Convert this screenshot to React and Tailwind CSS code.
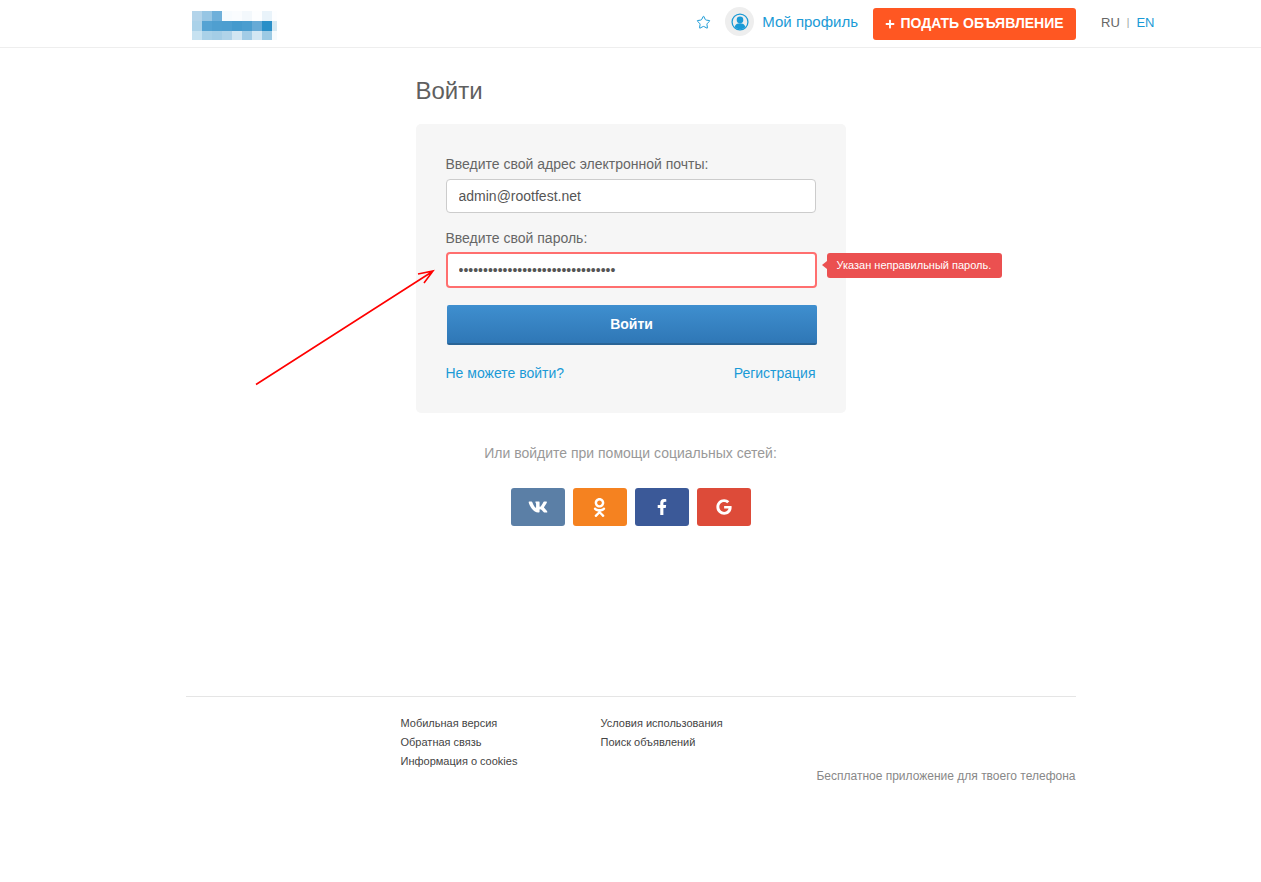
import React from "react"
import { Star } from "lucide-react"
import { FaVk, FaOdnoklassniki, FaFacebookF, FaGoogle, FaPlus } from "react-icons/fa"

// blurred logo, one colour per cell
const logoCells = [
  "#b3d4ea", "#97c6e4", "#6fb0da", "#f7fbfe", "#fafcfe", "#f3f8fc", "#fdfeff", "#e9f3fa", "#fdfeff",
  "#abd2e9", "#55a3d3", "#4f9fd0", "#4d9ed0", "#459acd", "#4a9dcf", "#66aad6", "#2a8fc8", "#d5e9f3",
  "#c7e2f1", "#aad1e8", "#a4cde6", "#b0d3e9", "#d2e6f2", "#a2cce6", "#d3e7f3", "#9ccae4", "#f7fbfd",
]

const socials = [
  { name: "vk", bg: "bg-[#5b7fa6]", icon: <FaVk className="text-[20px]" /> },
  { name: "ok", bg: "bg-[#f58220]", icon: <FaOdnoklassniki className="text-[19px]" /> },
  { name: "fb", bg: "bg-[#3b5998]", icon: <FaFacebookF className="text-[16px]" /> },
  { name: "g", bg: "bg-[#dd4b39]", icon: <FaGoogle className="text-[16px]" /> },
]

function Header() {
  return (
    <header className="h-[48px] border-b border-[#eeeeee] flex items-center justify-between pl-[192px] pr-[107px]">
      <div className="grid grid-cols-[repeat(9,10px)] grid-rows-[repeat(3,10px)] w-[85px] h-[29px] overflow-hidden mt-[4px]">
        {logoCells.map((color, i) => (
          <div key={i} style={{ backgroundColor: color }} />
        ))}
      </div>
      <div className="flex items-center">
        <Star size={15} strokeWidth={1.6} className="text-[#1a9ad6] mr-[14px] -mt-[2px]" />
        <div className="w-[29px] h-[29px] rounded-full bg-[#eeeeee] flex items-center justify-center -mt-[4px] mr-[8px]">
          <svg width="18" height="18" viewBox="0 0 17 17">
            <circle cx="8.5" cy="8.5" r="7.5" fill="none" stroke="#1a9ad6" strokeWidth="1.2" />
            <circle cx="8.5" cy="6.5" r="3.1" fill="#1a9ad6" />
            <path d="M3.4 13.2c.7-2.5 2.7-3.5 5.1-3.5s4.4 1 5.1 3.5c-1.2 1.3-3 2.1-5.1 2.1s-3.9-.8-5.1-2.1z" fill="#1a9ad6" />
          </svg>
        </div>
        <a className="text-[15px] text-[#1a9ad6] mr-[15px] -mt-[2px]">Мой профиль</a>
        <button type="button" className="w-[203px] h-[32px] rounded-[3px] bg-[#ff5722] text-white text-[14px] font-bold flex items-center justify-center gap-[5px]">
          <FaPlus className="text-[10px]" />
          ПОДАТЬ ОБЪЯВЛЕНИЕ
        </button>
        <div className="flex items-center text-[13px] ml-[25px] -mt-[2px] w-[53px]">
          <span className="text-[#666666]">RU</span>
          <span className="text-[#999999] text-[10px] mx-[7px]">|</span>
          <a className="text-[#1a9ad6]">EN</a>
        </div>
      </div>
    </header>
  )
}

function LoginCard() {
  return (
    <div className="w-[430px] h-[289px] rounded-[5px] bg-[#f6f6f6] px-[30px] pt-[32px]">
      <label className="block text-[14px] leading-[16px] text-[#666666] mb-[7px]">
        Введите свой адрес электронной почты:
      </label>
      <input
        readOnly
        value="admin@rootfest.net"
        className="block w-[370px] h-[34px] rounded-[4px] border border-[#cccccc] bg-white px-[12px] text-[14px] text-[#555555] outline-none"
      />
      <label className="block text-[14px] leading-[16px] text-[#666666] mt-[17px] mb-[6px]">
        Введите свой пароль:
      </label>
      <div className="relative w-[371px]">
        <input
          readOnly
          type="password"
          value="12345678901234567890123456789012"
          className="block w-[371px] h-[36px] rounded-[4px] border-2 border-[#ff6f6f] bg-white px-[11px] text-[14px] text-[#555555] outline-none"
        />
        {/* error tooltip */}
        <div className="absolute left-[381px] top-[1px] w-[175px] h-[25px] rounded-[3px] bg-[#eb5050] text-white text-[11px] flex items-center pl-[10px] whitespace-nowrap">
          <span className="absolute -left-[5px] top-[8px] border-y-[4px] border-r-[5px] border-y-transparent border-r-[#eb5050]" />
          Указан неправильный пароль.
        </div>
      </div>
      <button type="button" className="block w-[370px] h-[40px] ml-[1px] mt-[17px] rounded-[2px] bg-gradient-to-b from-[#3f8fcf] to-[#2f77b6] border-b-2 border-[#2a6496] text-white text-[14px] font-bold">
        Войти
      </button>
      <div className="flex justify-between w-[370px] mt-[20px] text-[14px] leading-[16px] text-[#1a9ad6]">
        <a>Не можете войти?</a>
        <a>Регистрация</a>
      </div>
    </div>
  )
}

function Footer() {
  return (
    <footer className="w-[890px] mx-auto mt-[170px] border-t border-[#e5e5e5] relative h-[100px]">
      <div className="flex pl-[215px] pt-[17px] text-[11px] leading-[19px] text-[#444444]">
        <div className="w-[200px] flex flex-col">
          <a>Мобильная версия</a>
          <a>Обратная связь</a>
          <a>Информация о cookies</a>
        </div>
        <div className="flex flex-col">
          <a>Условия использования</a>
          <a>Поиск объявлений</a>
        </div>
      </div>
      <div className="text-right text-[12px] leading-[14px] text-[#888888] -mt-[2px]">
        Бесплатное приложение для твоего телефона
      </div>
    </footer>
  )
}

export default function App() {
  return (
    <div className="relative min-h-[882px] bg-white font-['Liberation_Sans',Arial,sans-serif]">
      <Header />
      <main className="w-[430px] mx-auto">
        <h1 className="text-[24px] leading-[28px] text-[#5f5f5f] mt-[29px] mb-[19px]">Войти</h1>
        <LoginCard />
        <p className="text-center text-[14px] leading-[16px] text-[#999999] mt-[32px]">
          Или войдите при помощи социальных сетей:
        </p>
        <div className="flex justify-center gap-[8px] mt-[27px]">
          {socials.map((s) => (
            <a key={s.name} className={`w-[54px] h-[38px] rounded-[3px] ${s.bg} text-white flex items-center justify-center`}>
              {s.icon}
            </a>
          ))}
        </div>
      </main>
      <Footer />
      {/* red annotation arrow drawn over the page */}
      <svg className="absolute left-[250px] top-[260px] pointer-events-none" width="195" height="130" viewBox="0 0 195 130">
        <path d="M6 124.5 L182.5 11.5 M168 14 L183 11 L174 23" fill="none" stroke="#ff0000" strokeWidth="1.6" />
      </svg>
    </div>
  )
}
